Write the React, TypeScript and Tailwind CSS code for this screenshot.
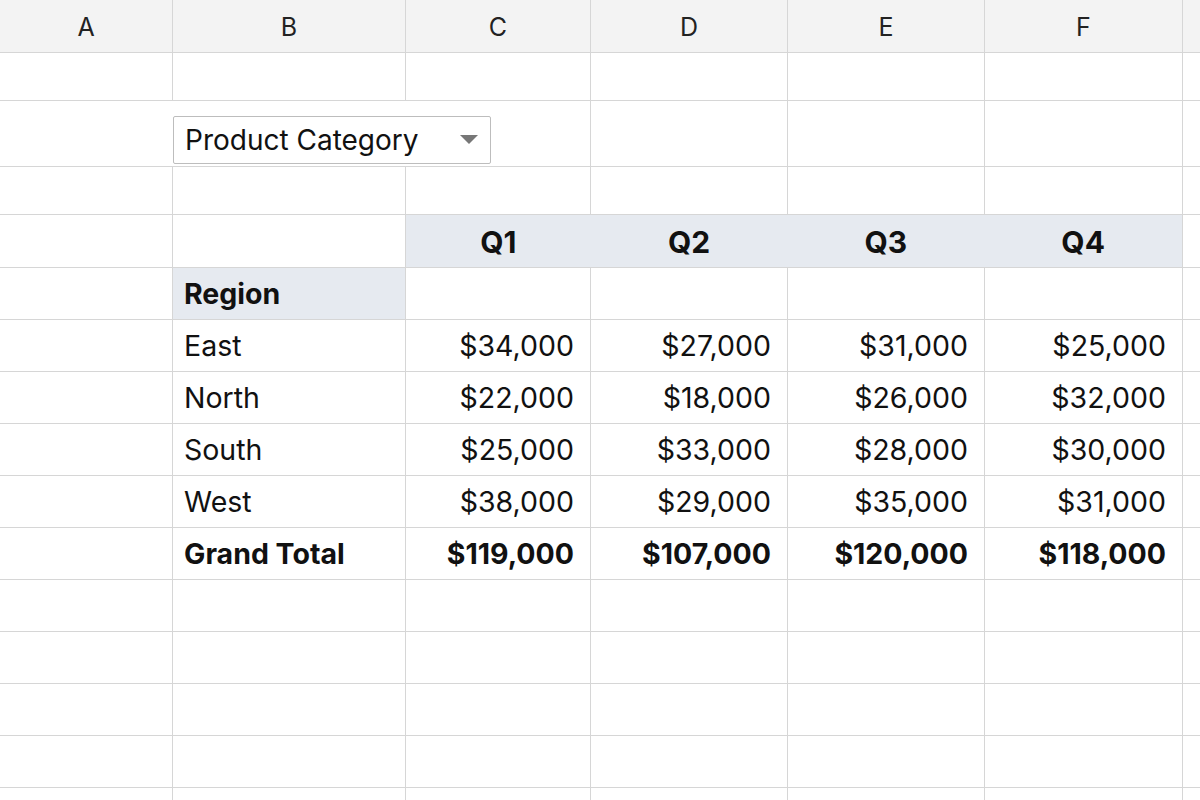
const widths = [173, 233, 185, 197, 197, 198]
const letters = ["A", "B", "C", "D", "E", "F"]

const data = [
    { region: "East", values: ["$34,000", "$27,000", "$31,000", "$25,000"] },
    { region: "North", values: ["$22,000", "$18,000", "$26,000", "$32,000"] },
    { region: "South", values: ["$25,000", "$33,000", "$28,000", "$30,000"] },
    { region: "West", values: ["$38,000", "$29,000", "$35,000", "$31,000"] },
]
const totals = ["$119,000", "$107,000", "$120,000", "$118,000"]

function Cell({ w, h, className = "", children }: { w: number; h: number; className?: string; children?: React.ReactNode }) {
    return (
        <div
            className={`shrink-0 flex items-center border-r border-b border-[#d6d6d6] ${className}`}
            style={{ width: w, height: h }}
        >
            {children}
        </div>
    )
}

function Row({ h, cells }: { h: number; cells?: (React.ReactNode | null)[] }) {
    return (
        <div className="flex">
            {widths.map((w, i) => (
                <Cell key={i} w={w} h={h} className={i === 0 ? "" : i === 1 ? "pl-[11px] pt-[2px]" : "justify-end pr-[16px] pt-[2px]"}>
                    {cells?.[i]}
                </Cell>
            ))}
            <Cell w={40} h={h} />
        </div>
    )
}

export default function App() {
    return (
        <div className="w-[1200px] h-[800px] overflow-hidden bg-white text-[#111] text-[28.5px]" style={{ fontFamily: "Inter, 'Liberation Sans', sans-serif" }}>
            <div className="flex bg-[#f3f3f3]">
                {widths.map((w, i) => (
                    <Cell key={i} w={w} h={53} className="justify-center text-[25px] text-[#222] pt-[3px]">
                        {letters[i]}
                    </Cell>
                ))}
                <Cell w={40} h={53} />
            </div>
            <Row h={48} />
            <div className="flex">
                <div className="shrink-0 flex items-end pb-[2px] border-r border-b border-[#d6d6d6]" style={{ width: 591, height: 66 }}>
                    <div className="ml-[173px] w-[318px] h-[48px] border border-[#bdbdbd] rounded-[2px] flex items-center justify-between pl-[11px] pr-[12px] text-[28px]">
                        <span>Product Category</span>
                        <svg width="18" height="10" viewBox="0 0 18 10"><path d="M0 0h18L9 9z" fill="#777" /></svg>
                    </div>
                </div>
                {widths.slice(3).map((w, i) => <Cell key={i} w={w} h={66} />)}
                <Cell w={40} h={66} />
            </div>
            <Row h={48} />
            <div className="flex">
                <Cell w={173} h={53} />
                <Cell w={233} h={53} />
                <div className="shrink-0 flex bg-[#e6eaf0] border-b border-r border-[#d6d6d6] font-bold text-[30px]" style={{ width: 777, height: 53 }}>
                    {widths.slice(2).map((w, i) => (
                        <div key={i} className="flex items-center justify-center pt-[2px]" style={{ width: w }}>Q{i + 1}</div>
                    ))}
                </div>
                <Cell w={40} h={53} />
            </div>
            <div className="flex">
                <Cell w={173} h={52} />
                <Cell w={233} h={52} className="pl-[11px] pt-[2px] bg-[#e6eaf0] font-bold">Region</Cell>
                {widths.slice(2).map((w, i) => <Cell key={i} w={w} h={52} />)}
                <Cell w={40} h={52} />
            </div>
            {data.map((r) => (
                <Row key={r.region} h={52} cells={[null, r.region, ...r.values]} />
            ))}
            <Row h={52} cells={[null, <b>Grand Total</b>, ...totals.map((t) => <b key={t}>{t}</b>)]} />
            <Row h={52} />
            <Row h={52} />
            <Row h={52} />
            <Row h={52} />
            <Row h={52} />
        </div>
    )
}
